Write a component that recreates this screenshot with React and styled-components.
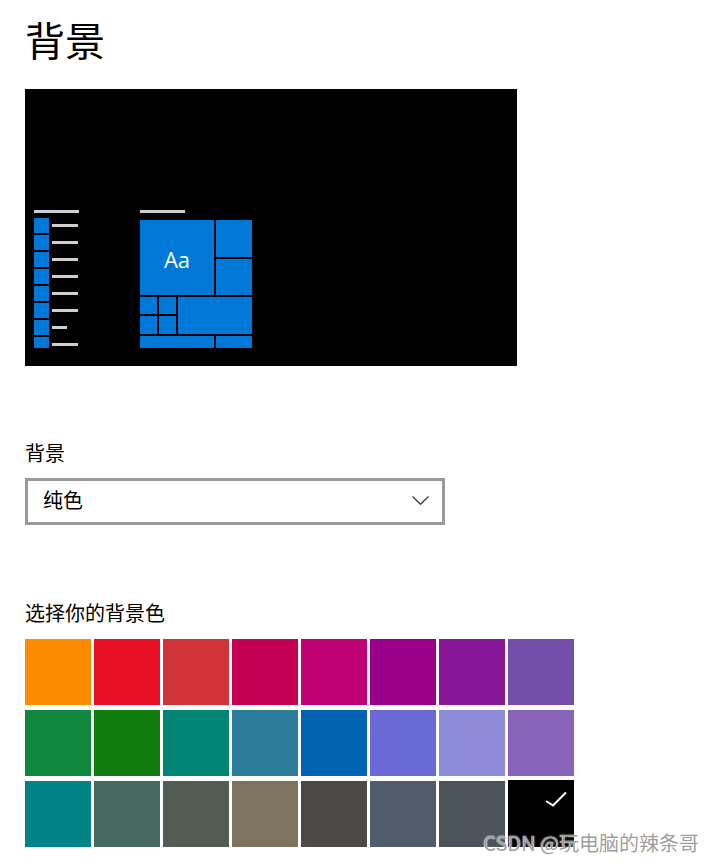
import React from "react";
import styled, { createGlobalStyle } from "styled-components";

const GlobalStyle = createGlobalStyle`
  html, body {
    margin: 0;
    padding: 0;
    background: #fff;
  }
  body {
    font-family: "Noto Sans CJK SC", "Noto Sans", sans-serif;
    color: #000;
  }
`;

const swatches = [
  "#FF8C00", "#E81123", "#D13438", "#C30052", "#BF0077", "#9A0089", "#881798", "#744DA9",
  "#10893E", "#107C10", "#018574", "#2D7D9A", "#0063B1", "#6B69D6", "#8E8CD8", "#8764B8",
  "#038387", "#486860", "#525E54", "#7E735F", "#4C4A48", "#515C6B", "#4A5459", "#000000",
];

const listLines = [26, 26, 26, 26, 26, 26, 15, 26];

function App() {
  return (
    <>
      <GlobalStyle />
      <Page>
        <Title>背景</Title>
        <Preview>
          <PreviewInner>
            <StartList>
              <Bar />
              <ListItems>
                {listLines.map((w, i) => (
                  <ListItem key={i}>
                    <SmallTile />
                    <Line style={{ width: w }} />
                  </ListItem>
                ))}
              </ListItems>
            </StartList>
            <StartTiles>
              <Bar />
              <TileGrid>
                <Tile $col="1 / 4" $row="1 / 3">Aa</Tile>
                <Tile $col="4" $row="1" />
                <Tile $col="4" $row="2" />
                <Tile $col="1" $row="3" />
                <Tile $col="2" $row="3" />
                <Tile $col="1" $row="4" />
                <Tile $col="2" $row="4" />
                <Tile $col="3 / 5" $row="3 / 5" />
                <Tile $col="1 / 4" $row="5" />
                <Tile $col="4" $row="5" />
              </TileGrid>
            </StartTiles>
          </PreviewInner>
        </Preview>

        <Label>背景</Label>
        <Select>
          <span>纯色</span>
          <svg width="17" height="9" viewBox="0 0 17 9">
            <polyline points="0.5,0.5 8.5,8.3 16.5,0.5" fill="none" stroke="#333" strokeWidth="1.2" />
          </svg>
        </Select>

        <ColorLabel>选择你的背景色</ColorLabel>
        <SwatchGrid>
          {swatches.map((c, i) => (
            <Swatch key={i} $color={c} $selected={i === swatches.length - 1}>
              {i === swatches.length - 1 && (
                <Check width="22" height="16" viewBox="0 0 22 16">
                  <polyline points="1,10 8,14.5 21,1.5" fill="none" stroke="#fff" strokeWidth="2" />
                </Check>
              )}
            </Swatch>
          ))}
        </SwatchGrid>
      </Page>
      <Watermark>CSDN @玩电脑的辣条哥</Watermark>
    </>
  );
}

const Page = styled.div`
  padding: 19px 0 0 25px;
  min-height: 863px;
  box-sizing: border-box;
`;

const Title = styled.h1`
  margin: 0;
  font-size: 40px;
  line-height: 40px;
  font-weight: 400;
`;

const Preview = styled.div`
  margin-top: 30px;
  width: 492px;
  height: 277px;
  background: #000;
  box-sizing: border-box;
  padding: 121px 0 0 9px;
`;

const PreviewInner = styled.div`
  display: flex;
  align-items: flex-start;
  gap: 61px;
  height: 138px;
  overflow: hidden;
`;

const Bar = styled.div`
  flex-shrink: 0;
  width: 45px;
  height: 3px;
  background: #cfcfcf;
`;

const StartList = styled.div`
  display: flex;
  flex-direction: column;
  flex-shrink: 0;
  gap: 5px;
`;

const ListItems = styled.div`
  display: flex;
  flex-direction: column;
  flex-shrink: 0;
  gap: 2px;
`;

const ListItem = styled.div`
  display: flex;
  align-items: center;
  flex-shrink: 0;
  gap: 3px;
`;

const SmallTile = styled.div`
  width: 15px;
  height: 15px;
  background: #0078d7;
`;

const Line = styled.div`
  height: 3px;
  background: #cfcfcf;
`;

const StartTiles = styled.div`
  display: flex;
  flex-direction: column;
  flex-shrink: 0;
  gap: 7px;
`;

const TileGrid = styled.div`
  display: grid;
  flex-shrink: 0;
  grid-template-columns: 17px 17px 36px 36px;
  grid-template-rows: 37px 36px 17px 18px 18px;
  gap: 2px;
`;

const Tile = styled.div`
  grid-column: ${(p) => p.$col};
  grid-row: ${(p) => p.$row};
  background: #0078d7;
  color: #fff;
  display: flex;
  align-items: center;
  justify-content: center;
  font-family: "Open Sans", "Noto Sans", sans-serif;
  font-size: 22px;
  padding-top: 3px;
  box-sizing: border-box;
`;

const Label = styled.div`
  margin-top: 77px;
  font-size: 20px;
  line-height: 20px;
`;

const Select = styled.div`
  margin-top: 15px;
  width: 420px;
  height: 47px;
  box-sizing: border-box;
  border: 3px solid #999;
  display: flex;
  align-items: center;
  justify-content: space-between;
  padding: 0 13px 0 15px;
  font-size: 20px;
  line-height: 20px;
  span {
    margin-top: -3px;
  }
  svg {
    margin-top: -2px;
  }
`;

const ColorLabel = styled.div`
  margin-top: 78px;
  font-size: 20px;
  line-height: 20px;
`;

const SwatchGrid = styled.div`
  margin-top: 16px;
  display: grid;
  grid-template-columns: repeat(8, 66px);
  grid-auto-rows: 66px;
  column-gap: 3px;
  row-gap: 5px;
`;

const Swatch = styled.div`
  position: relative;
  background: ${(p) => p.$color};
  ${(p) => p.$selected && "margin-top: -1px;"}
`;

const Check = styled.svg`
  position: absolute;
  left: 37px;
  top: 11px;
`;

const Watermark = styled.div`
  position: absolute;
  right: 15px;
  top: 832px;
  font-family: "Noto Sans CJK SC", "Liberation Sans", sans-serif;
  font-size: 20px;
  line-height: 22px;
  color: rgba(140, 140, 140, 0.85);
  text-shadow: 0 0 1px #fff, 0 0 2px #fff;
`;

export default App;
